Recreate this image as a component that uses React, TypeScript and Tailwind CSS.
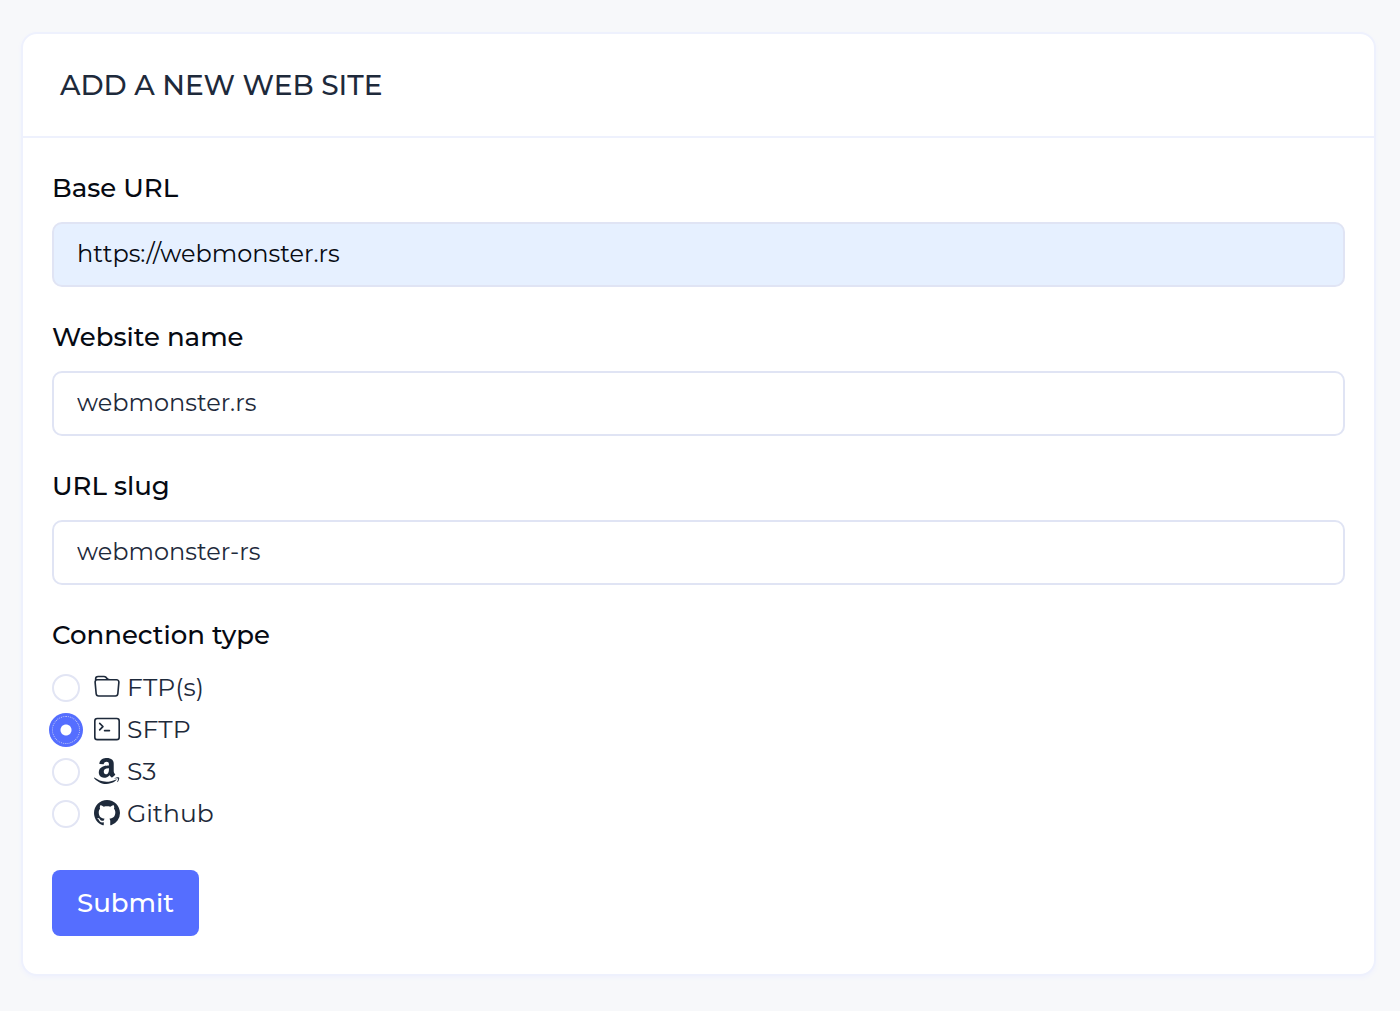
import React, { useState } from 'react';
import { BsAmazon, BsFolder, BsGithub, BsTerminal } from 'react-icons/bs';

const CONNECTION_TYPES = [
  { id: 'ftp', label: 'FTP(s)', icon: BsFolder },
  { id: 'sftp', label: 'SFTP', icon: BsTerminal },
  { id: 's3', label: 'S3', icon: BsAmazon },
  { id: 'github', label: 'Github', icon: BsGithub },
];

interface TextFieldProps {
  id: string;
  label: string;
  value: string;
  onChange: (value: string) => void;
  autofilled?: boolean;
}

const TextField: React.FC<TextFieldProps> = ({ id, label, value, onChange, autofilled }) => (
  <div>
    <label htmlFor={id} className="block mb-4 text-[26px] leading-9 font-medium text-[#060a12]">
      {label}
    </label>
    <input
      id={id}
      type="text"
      value={value}
      onChange={(e) => onChange(e.target.value)}
      className={`block w-full h-[65px] px-[23px] pb-[2px] rounded-[10px] border-2 border-[#e0e4f4] text-2xl outline-none ${
        autofilled ? 'bg-[#e6f0ff] text-[#060a12]' : 'bg-white text-[#1e2a3b]'
      }`}
    />
  </div>
);

const App: React.FC = () => {
  const [baseUrl, setBaseUrl] = useState('https://webmonster.rs');
  const [name, setName] = useState('webmonster.rs');
  const [slug, setSlug] = useState('webmonster-rs');
  const [connection, setConnection] = useState('sftp');

  return (
    <div className="min-h-screen bg-[#f7f8fa] pl-[21px] pr-6 py-8 font-[Montserrat,Inter,sans-serif]">
      <div className="bg-white rounded-2xl border-2 border-[#eef1fd] shadow-[0_2px_4px_#f0f2fd]">
        {/* Card header */}
        <div className="px-[37px] py-8 border-b-2 border-[#eef1fd]">
          <h1 className="text-[28px] leading-[38px] font-medium text-[#1e2a3b]">ADD A NEW WEB SITE</h1>
        </div>

        <form className="px-[29px] pt-8 pb-[38px]" onSubmit={(e) => e.preventDefault()}>
          <div className="space-y-8">
            <TextField id="base-url" label="Base URL" value={baseUrl} onChange={setBaseUrl} autofilled />
            <TextField id="website-name" label="Website name" value={name} onChange={setName} />
            <TextField id="url-slug" label="URL slug" value={slug} onChange={setSlug} />

            <fieldset>
              <legend className="mb-[14px] text-[26px] leading-9 font-medium text-[#060a12]">Connection type</legend>
              {CONNECTION_TYPES.map(({ id, label, icon: Icon }) => (
                <label key={id} className="flex items-center w-fit h-[42px] text-[25px] text-[#1e2a3b]">
                  <input
                    type="radio"
                    name="connection"
                    value={id}
                    checked={connection === id}
                    onChange={() => setConnection(id)}
                    className="appearance-none size-7 mr-[14px] rounded-full border-2 border-[#e2e5f4] bg-white checked:border checked:border-[#c0c8f4] checked:border-dotted checked:bg-[radial-gradient(circle,#fff_5px,#556eff_6px)] checked:bg-origin-border checked:ring-3 checked:ring-[#556eff]"
                  />
                  <Icon size={26} className="mr-[7px] mb-[2px]" />
                  {label}
                </label>
              ))}
            </fieldset>
          </div>

          <button
            type="submit"
            className="mt-[35px] h-[66px] px-[25px] rounded-lg bg-[#556eff] text-[26px] font-medium text-white"
          >
            Submit
          </button>
        </form>
      </div>
    </div>
  );
};

export default App;
